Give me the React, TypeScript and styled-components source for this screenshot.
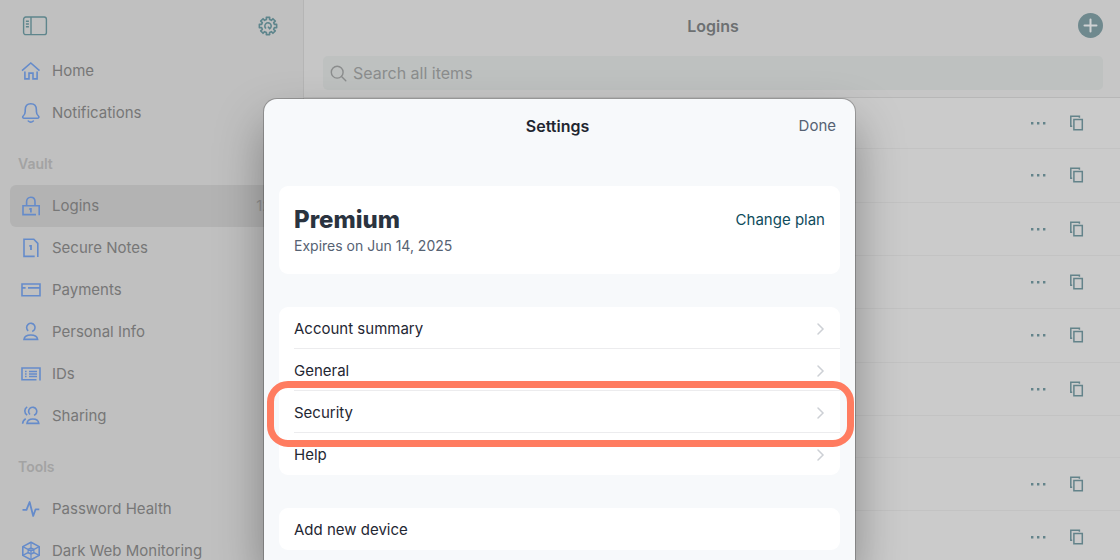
import React from "react";
import styled, { createGlobalStyle } from "styled-components";

const GlobalStyle = createGlobalStyle`
  *, *::before, *::after { box-sizing: border-box; }
  body { margin: 0; background: #cbcbcb; font-family: Inter, "Liberation Sans", sans-serif; }
  button, input { font: inherit; color: inherit; border: 0; padding: 0; background: none; }
  button { cursor: pointer; text-align: left; }
  h1, h2, h3, p, ul { margin: 0; padding: 0; }
  ul { list-style: none; }
  svg { display: block; flex: none; }
`;

const Page = styled.div`
  position: relative;
  height: 100vh;
  overflow: hidden;
  display: flex;
`;

const Sidebar = styled.aside`
  flex: none;
  width: 304px;
  overflow: hidden;
  background: #c0c0c0;
  border-right: 1px solid #b5b5b5;
`;

const SidebarTop = styled.div`
  height: 50px;
  padding: 2px 25px 0 22px;
  display: flex;
  align-items: center;
  justify-content: space-between;
  color: #5e858c;
`;

const NavList = styled.ul`
  padding: 0 10px;
`;

const NavLink = styled.a<{ $active?: boolean }>`
  display: flex;
  align-items: center;
  gap: 11px;
  height: 42px;
  padding: 0 12px 0 11px;
  border-radius: 6px;
  background: ${(p) => (p.$active ? "#b3b3b3" : "transparent")};
  color: #777;
  font-size: 15px;
  line-height: 20px;
  text-decoration: none;

  svg { color: #658bca; }
`;

const Count = styled.span`
  margin-left: auto;
  color: #929292;
`;

const NavHeading = styled.h2`
  height: 51px;
  padding: 20px 18px 0;
  color: #a3a3a3;
  font-size: 14px;
  font-weight: 600;
  line-height: 20px;
`;

const Main = styled.main`
  flex: 1;
  min-width: 0;
  background: #cbcbcb;
`;

const MainHeader = styled.header`
  padding: 0 17px 7px 19px;
  background: #c6c6c6;
  border-bottom: 1px solid #b7b7b7;
`;

const TitleBar = styled.div`
  display: grid;
  grid-template-columns: 1fr auto 1fr;
  align-items: center;
  height: 51px;
  margin-bottom: 5px;
`;

const PageTitle = styled.h1`
  grid-column: 2;
  color: #6d7072;
  font-size: 16px;
  font-weight: 600;
  line-height: 20px;
`;

const AddButton = styled.button`
  justify-self: end;
  display: grid;
  place-items: center;
  width: 25px;
  height: 25px;
  border-radius: 50%;
  background: #6f898e;
  color: #cfd2d3;
`;

const SearchBox = styled.label`
  display: flex;
  align-items: center;
  gap: 6px;
  height: 34px;
  padding: 0 7px;
  border-radius: 5px;
  background: #bec1c0;
  color: #8b8d8d;
`;

const SearchInput = styled.input`
  flex: 1;
  min-width: 0;
  outline: none;
  font-size: 16px;
  line-height: 20px;

  &::placeholder { color: #8b8d8d; opacity: 1; }
`;

const ItemList = styled.ul`
  &:first-of-type li:first-child { height: 51px; }
`;

const ItemRow = styled.li`
  display: flex;
  align-items: center;
  justify-content: flex-end;
  gap: 24px;
  height: 53px;
  padding: 0 36px 1px 0;
  border-bottom: 1px solid #c3c3c3;
  color: #63838a;

  &:nth-child(3n + 2) { height: 54px; }
`;

const GroupGap = styled.div`
  height: 42px;
  border-bottom: 1px solid #c5c5c5;
`;

const IconButton = styled.button`
  display: grid;
  place-items: center;
`;

const Overlay = styled.div`
  position: absolute;
  inset: 0;
  display: flex;
  justify-content: center;
  padding: 99px 1px 0 0;
`;

const Modal = styled.section`
  width: 591px;
  max-width: 100%;
  padding: 0 15px;
  border-radius: 13px 13px 0 0;
  background: #f7f9fb;
  box-shadow: 0 0 0 1px rgba(0, 0, 0, 0.22), 0 24px 48px rgba(0, 0, 0, 0.34);
`;

const ModalHeader = styled.header`
  display: grid;
  grid-template-columns: 1fr auto 1fr;
  align-items: center;
  height: 53px;
  margin-bottom: 34px;
  padding-right: 4px;
`;

const ModalTitle = styled.h2`
  grid-column: 2;
  color: #1f2630;
  font-size: 16px;
  font-weight: 600;
  line-height: 20px;
`;

const DoneButton = styled.button`
  justify-self: end;
  color: #566273;
  font-size: 15px;
  line-height: 20px;
`;

const Card = styled.div`
  margin-bottom: 33px;
  border-radius: 9px;
  background: #fff;
`;

const PlanCard = styled(Card)`
  display: flex;
  align-items: flex-start;
  justify-content: space-between;
  height: 88px;
  padding: 20px 15px 0;
`;

const PlanName = styled.h3`
  color: #2a333f;
  font-size: 24px;
  font-weight: 800;
  line-height: 28px;
`;

const PlanExpiry = styled.p`
  color: #566273;
  font-size: 14px;
  line-height: 24px;
`;

const PlanLink = styled.a`
  margin-top: 4px;
  color: #0f4c5c;
  font-size: 15px;
  line-height: 20px;
  text-decoration: none;
`;

const SettingRow = styled.div`
  position: relative;
  padding-left: 15px;
`;

const SettingButton = styled.button<{ $divided?: boolean }>`
  display: flex;
  align-items: center;
  justify-content: space-between;
  width: 100%;
  height: 42px;
  padding: 1px 15px 0 0;
  box-shadow: ${(p) => (p.$divided ? "inset 0 -1px #ececee" : "none")};
  color: #1f2733;
  font-size: 15px;
  line-height: 20px;

  svg { color: #cdd0d5; }
`;

const Highlight = styled.span`
  position: absolute;
  inset: -10px -14px -14px -12px;
  z-index: 1;
  border: 7px solid #ff7c60;
  border-radius: 21px;
  pointer-events: none;
`;

function NavIcon({ children }: { children: React.ReactNode }) {
  return (
    <svg width="20" height="20" viewBox="0 0 20 20" fill="none" stroke="currentColor" strokeWidth="1.6" aria-hidden="true">
      {children}
    </svg>
  );
}

const icons = {
  home: <path d="M1 9.700 9.800 2l8.700 7.700M3.900 10.600v7.300H8v-5.800h4v5.800h4.100v-7.300" />,
  bell: (
    <path
      strokeLinecap="round"
      strokeLinejoin="round"
      d="M3.200 15.300h13.200c1.400 0 2-1.400 1-2.300-1.500-1.300-2-2.500-2-4.600V7c0-3.700-2-6.200-5.600-6.200S4.200 3.300 4.200 7v1.400c0 2.100-.5 3.300-2 4.600-1 .9-.4 2.300 1 2.300M7.300 18c1.400 1.300 3.600 1.300 5 0"
    />
  ),
  lock: (
    <>
      <path d="M15 18.600H2V9.700h16.200v9.600M5.600 9.700V5.800c0-2.600 1.600-4.500 4.200-4.500S14 3.200 14 5.800v3.900" />
      <path d="M8.300 13h1.600v3.400" strokeWidth="1.800" />
    </>
  ),
  note: (
    <>
      <path d="M13.700 18.400H3V1.200h9.800l4 4.200V19" />
      <path d="M8.300 7.900h1.700v4" strokeWidth="1.800" />
    </>
  ),
  card: <path d="M1 4h18v11.800H1zM1 7.900h3.600M7 7.900h12" />,
  person: (
    <path d="M7.200 8.800A4.200 4.200 0 1 1 11.200 9.500M3 17.400c.4-2.900 2.600-4.400 6.800-4.400s6.400 1.500 6.800 4.400z" />
  ),
  id: (
    <path d="M15.500 15.800H1V4h18v12.400M4 7.500h1.600M8 7.500h8M4 10h1.600M8 10h8M4 12.500h1.600M8 12.500h8" />
  ),
  sharing: (
    <path d="M9 8.500a4.100 4.100 0 1 1 4 .8M6 17.400c.3-2.900 2.200-4.400 5.900-4.400s5.600 1.500 5.900 4.400zM6.200.9C3 2.700 3 7.300 6.200 9.100M4.800 12.700c-1.900.9-3 2.500-3.200 5" />
  ),
  pulse: <path strokeWidth="1.800" strokeLinejoin="round" d="M1.500 10.800h4L8.600 3l3.600 14 2.400-6.700h3.700" />,
  web: (
    <>
      <path
        strokeLinejoin="round"
        d="M10 1.200 18.200 5.600v8.800L10 18.800 1.800 14.400V5.600z"
      />
      <path strokeWidth="1.200" d="M10 1.200v17.600M1.800 5.600 18.200 14.400M18.200 5.600 1.800 14.400M10 6.800 12.900 8.400v3.200L10 13.200 7.100 11.600V8.400z" />
    </>
  ),
};

type IconName = keyof typeof icons;

const general: [IconName, string][] = [
  ["home", "Home"],
  ["bell", "Notifications"],
];

const vault: [IconName, string][] = [
  ["lock", "Logins"],
  ["note", "Secure Notes"],
  ["card", "Payments"],
  ["person", "Personal Info"],
  ["id", "IDs"],
  ["sharing", "Sharing"],
];

const tools: [IconName, string][] = [
  ["pulse", "Password Health"],
  ["web", "Dark Web Monitoring"],
];

const settings = ["Account summary", "General", "Security", "Help"];

function NavGroup({ items, active }: { items: [IconName, string][]; active?: string }) {
  return (
    <NavList>
      {items.map(([icon, label]) => (
        <li key={label}>
          <NavLink href="#" $active={label === active}>
            <NavIcon>{icons[icon]}</NavIcon>
            {label}
            {label === active && <Count>120</Count>}
          </NavLink>
        </li>
      ))}
    </NavList>
  );
}

function PanelIcon() {
  return (
    <svg width="26" height="20" viewBox="0 0 26 20" fill="none" stroke="currentColor" strokeWidth="1.4" aria-hidden="true">
      <rect x="1.600" y="1" width="22.800" height="17.600" rx="2.200" />
      <path d="M9 1v17.600M3.900 5.200h3M3.900 8h3M3.900 10.800h3" />
    </svg>
  );
}

// Eight-toothed cog outline, as points on alternating radii.
const cog = Array.from({ length: 8 }, (_, i) =>
  [[-14, 6.6], [-11, 8.800], [11, 8.800], [14, 6.6]].map(([offset, r]) => {
    const a = ((i * 45 + offset) * Math.PI) / 180;
    return `${(10 + r * Math.sin(a)).toFixed(2)},${(10 - r * Math.cos(a)).toFixed(2)}`;
  }).join(" ")
).join(" ");

function GearIcon() {
  return (
    <svg width="20" height="20" viewBox="0 0 20 20" fill="none" stroke="currentColor" strokeWidth="1.6" aria-hidden="true">
      <polygon points={cog} strokeLinejoin="round" />
      <path d="M8 12.500A3.200 3.200 0 1 1 11.600 12.800L10 10.600" />
    </svg>
  );
}

function Item() {
  return (
    <ItemRow>
      <IconButton aria-label="More actions">
        <svg width="16" height="16" viewBox="0 0 16 16" fill="currentColor" aria-hidden="true">
          <path d="M1 7h2.400v2.400H1zM7 7h2.400v2.400H7zM13 7h2.400v2.400H13z" />
        </svg>
      </IconButton>
      <IconButton aria-label="Copy">
        <svg width="14" height="16" viewBox="0 0 14 16" fill="none" stroke="currentColor" strokeWidth="1.5" aria-hidden="true">
          <path d="M3.900 4.500h8.400v10.200H3.900zM2.200 11.200H.8V1.300h8.600v1.400" />
        </svg>
      </IconButton>
    </ItemRow>
  );
}

export default function App() {
  return (
    <>
      <GlobalStyle />
      <Page>
        <Sidebar>
          <SidebarTop>
            <IconButton aria-label="Toggle sidebar">
              <PanelIcon />
            </IconButton>
            <IconButton aria-label="Settings">
              <GearIcon />
            </IconButton>
          </SidebarTop>
          <nav>
            <NavGroup items={general} />
            <NavHeading>Vault</NavHeading>
            <NavGroup items={vault} active="Logins" />
            <NavHeading>Tools</NavHeading>
            <NavGroup items={tools} />
          </nav>
        </Sidebar>

        <Main>
          <MainHeader>
            <TitleBar>
              <PageTitle>Logins</PageTitle>
              <AddButton aria-label="Add login">
                <svg width="15" height="15" viewBox="0 0 15 15" fill="none" stroke="currentColor" strokeWidth="2" strokeLinecap="round" aria-hidden="true">
                  <path d="M7.500 1.500v12M1.500 7.500h12" />
                </svg>
              </AddButton>
            </TitleBar>
            <SearchBox>
              <svg width="17" height="17" viewBox="0 0 17 17" fill="none" stroke="currentColor" strokeWidth="1.400" strokeLinecap="round" aria-hidden="true">
                <circle cx="7.200" cy="7.200" r="5.900" />
                <path d="m11.500 11.500 4.300 4.300" />
              </svg>
              <SearchInput type="search" placeholder="Search all items" aria-label="Search all items" />
            </SearchBox>
          </MainHeader>
          <ItemList>
            {Array.from({ length: 6 }, (_, i) => (
              <Item key={i} />
            ))}
          </ItemList>
          <GroupGap />
          <ul>
            {Array.from({ length: 2 }, (_, i) => (
              <Item key={i} />
            ))}
          </ul>
        </Main>

        <Overlay>
          <Modal role="dialog" aria-labelledby="settings-title">
            <ModalHeader>
              <ModalTitle id="settings-title">Settings</ModalTitle>
              <DoneButton>Done</DoneButton>
            </ModalHeader>
            <PlanCard>
              <div>
                <PlanName>Premium</PlanName>
                <PlanExpiry>Expires on Jun 14, 2025</PlanExpiry>
              </div>
              <PlanLink href="#">Change plan</PlanLink>
            </PlanCard>
            <Card>
              {settings.map((label, i) => (
                <SettingRow key={label}>
                  <SettingButton $divided={i < settings.length - 1}>
                    {label}
                    <svg width="9" height="14" viewBox="0 0 9 14" fill="none" stroke="currentColor" strokeWidth="1.500" strokeLinecap="round" aria-hidden="true">
                      <path d="m2 2 5 5-5 5" />
                    </svg>
                  </SettingButton>
                  {label === "Security" && <Highlight />}
                </SettingRow>
              ))}
            </Card>
            <Card>
              <SettingRow>
                <SettingButton>Add new device</SettingButton>
              </SettingRow>
            </Card>
          </Modal>
        </Overlay>
      </Page>
    </>
  );
}
